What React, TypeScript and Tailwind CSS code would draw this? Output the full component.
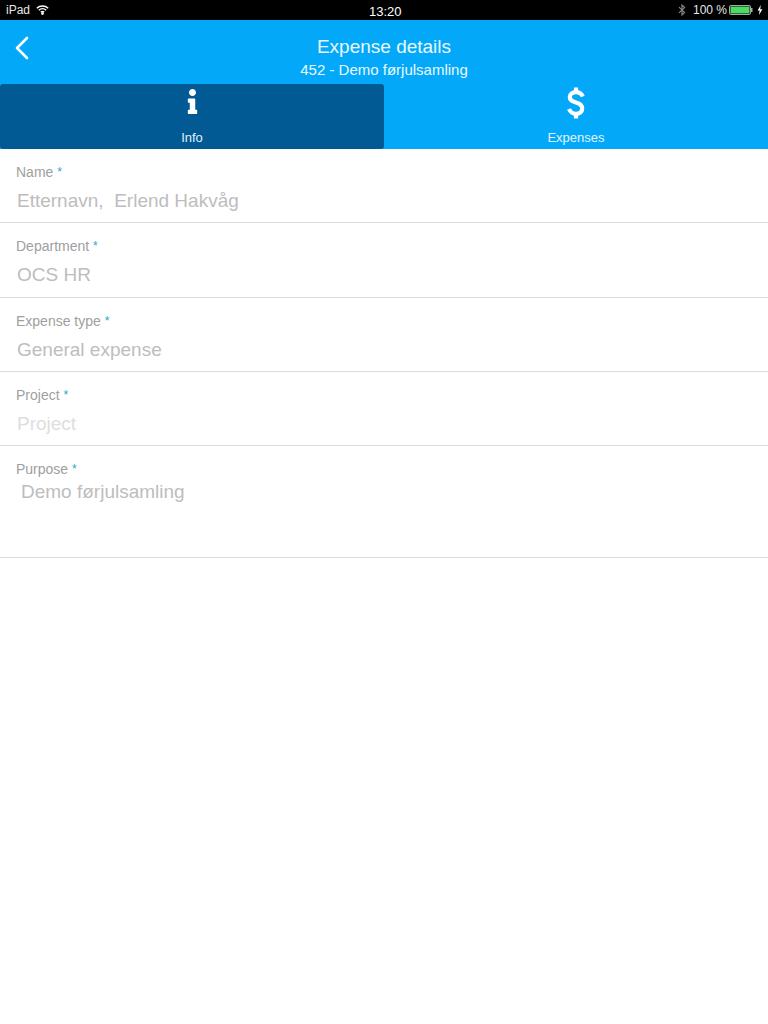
import { FaInfo } from "react-icons/fa";

function Field({ label, value, h, valueClass = "text-[#bdbdbd]", box = "pl-[17px] mt-[8px]" }: { label: string; value: string; h: string; valueClass?: string; box?: string }) {
  return (
    <div className={`${h} border-b border-[#dcdcdc] flex flex-col`}>
      <div className="pl-4 pt-[15px] text-[14px] leading-[17px] text-[#a0a0a0]">
        {label} <span className="text-[12px] text-[#2aa5d0] align-[1px]">*</span>
      </div>
      <div className={`${box} text-[19px] leading-[24px] whitespace-pre ${valueClass}`}>{value}</div>
    </div>
  );
}

export default function App() {
  return (
    <div className="w-[768px] h-[1024px] bg-white overflow-hidden font-['Liberation_Sans',Arial,sans-serif]">
      <div className="h-5 bg-black text-white flex items-center justify-between text-[12px] pl-[6px] pr-[5px] relative">
        <div className="flex items-center gap-[6px]">
          <span className="text-[#e6e6e6]">iPad</span>
          <svg width="13" height="10" viewBox="0 0 13 10" fill="none" stroke="white" strokeWidth="1.4">
            <path d="M0.8 3.2C4 0.2 9 0.2 12.2 3.2" />
            <path d="M2.8 5.2C4.9 3.3 8.1 3.3 10.2 5.2" />
            <path d="M4.8 7.1C5.8 6.3 7.2 6.3 8.2 7.1" />
            <circle cx="6.5" cy="8.6" r="0.7" fill="white" />
          </svg>
        </div>
        <span className="absolute left-[369px] top-[2px] text-[13px] font-normal text-white">13:20</span>
        <div className="flex items-center">
          <svg width="8" height="12" viewBox="0 0 8 12" fill="none" stroke="#8a8a8a" strokeWidth="1.1">
            <path d="M1 3.2L6.6 8.4L4 11V1L6.6 3.6L1 8.8" />
          </svg>
          <span className="ml-[7px] text-[#e6e6e6]">100 %</span>
          <svg width="24" height="10" viewBox="0 0 24 10" className="ml-[2px]">
            <rect x="0.5" y="0.5" width="21" height="9" rx="1.5" fill="none" stroke="#a8a8a8" />
            <rect x="1.5" y="1.5" width="19" height="7" fill="#4cd964" />
            <rect x="22" y="3" width="1.5" height="4" fill="#a8a8a8" />
          </svg>
          <svg width="6" height="10" viewBox="0 0 6 10" className="ml-[4px]"><path d="M3.8 0L0.6 5.6H2.6L2 10L5.4 4.2H3.2Z" fill="white" /></svg>
        </div>
      </div>

      <div className="h-[129px] bg-[#03a9f8] text-white flex flex-col">
        <div className="h-[64px] relative flex flex-col items-center">
          <svg className="absolute left-[14px] top-[16px]" width="16" height="24" viewBox="0 0 16 24" fill="none" stroke="white" strokeWidth="2.6" strokeLinecap="round" strokeLinejoin="round">
            <path d="M13 2L3 12L13 22" />
          </svg>
          <div className="text-[19px] leading-[22px] mt-[16px] text-[#e8f8ff]">Expense details</div>
          <div className="text-[15px] leading-[17px] mt-[3px] text-[#e8f8ff]">452 - Demo førjulsamling</div>
        </div>
        <div className="h-[65px] flex">
          <div className="w-[384px] bg-[#015a93] rounded-[3px] flex flex-col items-center">
            <FaInfo className="mt-[5px] w-[27px] h-[25px]" />
            <div className="mt-[16px] text-[13px] leading-[15px] text-[#e0f0fa]">Info</div>
          </div>
          <div className="w-[384px] flex flex-col items-center">
            <svg width="18" height="32" viewBox="0 0 18 32" fill="none" stroke="white" strokeWidth="4.2" strokeLinecap="butt" className="mt-[3px]">
              <path d="M9 0.5V5M9 27V31.5" />
              <path d="M15.8 9.5C14.5 6.5 12 5.2 9 5.2C5 5.2 2.8 7.2 2.8 10C2.8 13.2 5.5 14.6 9 15.6C12.5 16.6 15.2 18 15.2 21.6C15.2 24.8 12.8 26.8 9 26.8C6 26.8 3.4 25.2 2 22" />
            </svg>
            <div className="mt-[11px] text-[13px] leading-[15px] text-[#e0f5ff]">Expenses</div>
          </div>
        </div>
      </div>

      <Field label="Name" value="Etternavn,  Erlend Hakvåg" h="h-[74px]" />
      <Field label="Department" value="OCS HR" h="h-[75px]" />
      <Field label="Expense type" value="General expense" h="h-[74px]" />
      <Field label="Project" value="Project" h="h-[74px]" valueClass="text-[#dedede]" />
      <Field label="Purpose" value="Demo førjulsamling" h="h-[112px]" box="pl-[21px] mt-[2px]" />
    </div>
  );
}
